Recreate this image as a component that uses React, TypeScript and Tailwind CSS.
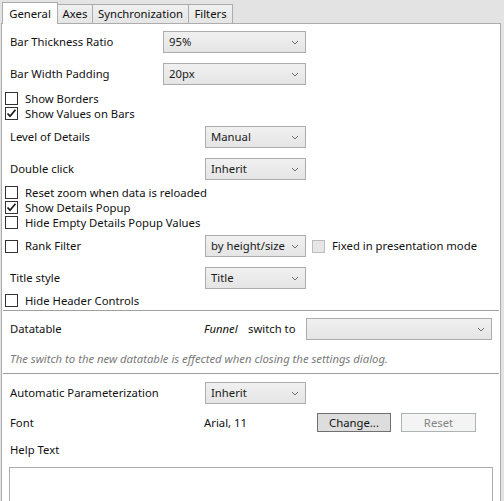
import React from 'react';

const font = { fontFamily: '"Noto Sans", "Segoe UI", Arial, sans-serif' };

function Chevron() {
  return (
    <svg width="8" height="5" viewBox="0 0 8 5" className="shrink-0">
      <polyline points="1,1 4,4 7,1" fill="none" stroke="#6e6e6e" strokeWidth="1" />
    </svg>
  );
}

function Select({ value, width }: { value?: string; width: string }) {
  return (
    <div
      className={`flex items-center justify-between h-[22px] ${width} border border-[#acacac] bg-gradient-to-b from-[#f0f0f0] to-[#e5e5e5] pl-[5px] pr-[6px] shrink-0`}
    >
      <span className="leading-none text-[#1a1a1a]">{value}</span>
      <Chevron />
    </div>
  );
}

function Box({ checked, disabled }: { checked?: boolean; disabled?: boolean }) {
  return (
    <div
      className={`w-[13px] h-[13px] shrink-0 border flex items-center justify-center ${
        disabled ? 'border-[#bcbcbc] bg-[#e6e6e6]' : 'border-[#333333] bg-white'
      }`}
    >
      {checked && (
        <svg width="11" height="11" viewBox="0 0 11 11">
          <polyline points="1.5,5.5 4,8.2 9.5,1.8" fill="none" stroke="#1a1a1a" strokeWidth="1.7" />
        </svg>
      )}
    </div>
  );
}

function Check({ label, checked, mt }: { label: string; checked?: boolean; mt?: string }) {
  return (
    <div className={`flex items-center h-[15px] pl-[3px] gap-[7px] ${mt ?? ''}`}>
      <Box checked={checked} />
      <span className="leading-none">{label}</span>
    </div>
  );
}

function Row({ label, labelW, mt, children }: { label: string; labelW: string; mt: string; children: React.ReactNode }) {
  return (
    <div className={`flex items-center h-[22px] pl-[8px] ${mt}`}>
      <span className={`${labelW} shrink-0 leading-none`}>{label}</span>
      {children}
    </div>
  );
}

function Tab({ label, active, width }: { label: string; active?: boolean; width: string }) {
  return (
    <div
      className={`${width} -ml-px first:ml-0 flex items-center justify-center border border-b-0 border-[#acacac] ${
        active ? 'h-[22px] bg-white relative z-10' : 'h-[19px] mb-px bg-gradient-to-b from-[#f0f0f0] to-[#e5e5e5]'
      }`}
    >
      <span className="leading-none">{label}</span>
    </div>
  );
}

export default function App() {
  return (
    <div className="w-[504px] h-[501px] overflow-hidden bg-[#e3e3e3] text-[11.3px] text-[#111]" style={font}>
      <div className="flex items-end h-[24px] pl-[2px]">
        <Tab label="General" active width="w-[56px]" />
        <Tab label="Axes" width="w-[36px]" />
        <Tab label="Synchronization" width="w-[97px]" />
        <Tab label="Filters" width="w-[45px]" />
      </div>
      <div className="-mt-px ml-px w-[500px] pb-[40px] bg-white border border-[#acacac] border-b-0 flex flex-col [&>*]:shrink-0">
        <Row label="Bar Thickness Ratio" labelW="w-[153px]" mt="mt-[7px]">
          <Select value="95%" width="w-[143px]" />
        </Row>
        <Row label="Bar Width Padding" labelW="w-[153px]" mt="mt-[10px]">
          <Select value="20px" width="w-[143px]" />
        </Row>
        <Check label="Show Borders" mt="mt-[6px]" />
        <Check label="Show Values on Bars" checked />
        <Row label="Level of Details" labelW="w-[195px]" mt="mt-[5px]">
          <Select value="Manual" width="w-[101px]" />
        </Row>
        <Row label="Double click" labelW="w-[195px]" mt="mt-[10px]">
          <Select value="Inherit" width="w-[101px]" />
        </Row>
        <Check label="Reset zoom when data is reloaded" mt="mt-[5px]" />
        <Check label="Show Details Popup" checked />
        <Check label="Hide Empty Details Popup Values" />
        <div className="flex items-center h-[22px] pl-[3px] mt-[5px]">
          <Box />
          <span className="w-[180px] shrink-0 ml-[7px] leading-none">Rank Filter</span>
          <Select value="by height/size" width="w-[101px]" />
          <div className="ml-[6px]">
            <Box disabled />
          </div>
          <span className="ml-[7px] leading-none">Fixed in presentation mode</span>
        </div>
        <Row label="Title style" labelW="w-[195px]" mt="mt-[10px]">
          <Select value="Title" width="w-[101px]" />
        </Row>
        <Check label="Hide Header Controls" mt="mt-[4px]" />
        <div className="mt-[2px] mx-[1px] h-px bg-[#a0a0a0]" />
        <div className="flex items-center h-[22px] pl-[8px] mt-[7px]">
          <span className="w-[194px] shrink-0 leading-none">Datatable</span>
          <span className="w-[44px] shrink-0 italic leading-none">Funnel</span>
          <span className="w-[58px] shrink-0 leading-none">switch to</span>
          <Select width="w-[186px]" />
        </div>
        <div className="mt-[11px] h-[16px] pl-[8px] flex items-center italic text-[#7a7a7a]">
          <span className="leading-none">The switch to the new datatable is effected when closing the settings dialog.</span>
        </div>
        <div className="mt-[6px] mx-[1px] h-px bg-[#a0a0a0]" />
        <Row label="Automatic Parameterization" labelW="w-[195px]" mt="mt-[8px]">
          <Select value="Inherit" width="w-[101px]" />
        </Row>
        <div className="flex items-center h-[19px] pl-[8px] mt-[9px]">
          <span className="w-[194px] shrink-0 leading-none">Font</span>
          <span className="w-[113px] shrink-0 leading-none">Arial, 11</span>
          <div className="w-[74px] h-[19px] flex items-center justify-center border border-[#707070] bg-[#dddddd]">
            <span className="leading-none">Change...</span>
          </div>
          <div className="ml-[10px] w-[75px] h-[19px] flex items-center justify-center border border-[#adb2b5] bg-[#f4f4f4] text-[#838383]">
            <span className="leading-none">Reset</span>
          </div>
        </div>
        <div className="mt-[10px] h-[16px] pl-[8px] flex items-center">
          <span className="leading-none">Help Text</span>
        </div>
        <div className="mt-[9px] ml-[7px] w-[484px] h-[60px] border border-[#acacac] bg-white" />
      </div>
    </div>
  );
}
